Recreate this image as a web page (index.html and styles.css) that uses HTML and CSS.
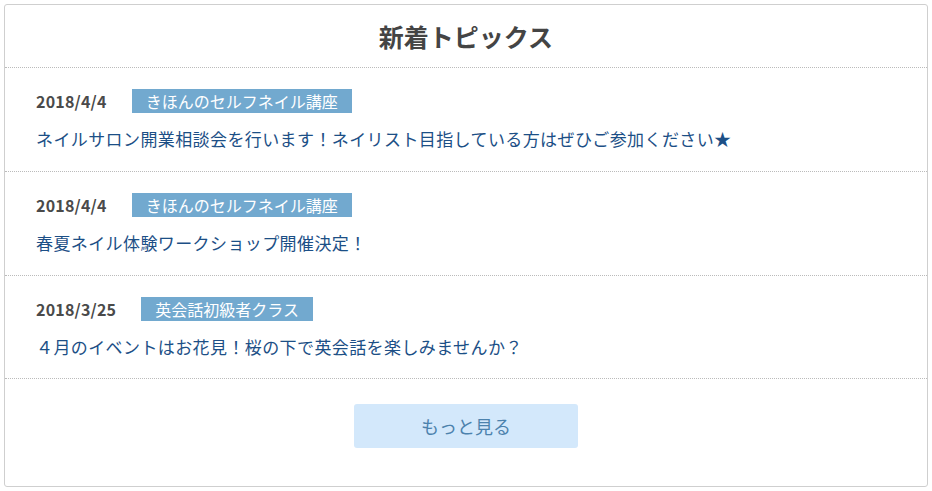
FILE: index.html
```html
<!DOCTYPE html>
<html>
	<head>
		<meta charset="UTF-8">
		<title>新着トピックス</title>
		<link rel="stylesheet" href="styles.css">
	</head>
	<body>
		<div class="topics">
			<h2 class="topics-title">新着トピックス</h2>
			<ul class="topic-list">
				<li class="topic">
					<div class="topic-meta">
						<span class="topic-date">2018/4/4</span>
						<span class="topic-tag">きほんのセルフネイル講座</span>
					</div>
					<a class="topic-link" href="javascript:void(0)">ネイルサロン開業相談会を行います！ネイリスト目指している方はぜひご参加ください★</a>
				</li>
				<li class="topic">
					<div class="topic-meta">
						<span class="topic-date">2018/4/4</span>
						<span class="topic-tag">きほんのセルフネイル講座</span>
					</div>
					<a class="topic-link" href="javascript:void(0)">春夏ネイル体験ワークショップ開催決定！</a>
				</li>
				<li class="topic">
					<div class="topic-meta">
						<span class="topic-date">2018/3/25</span>
						<span class="topic-tag">英会話初級者クラス</span>
					</div>
					<a class="topic-link" href="javascript:void(0)">４月のイベントはお花見！桜の下で英会話を楽しみませんか？</a>
				</li>
			</ul>
			<div class="topics-more">
				<a class="more-btn" href="javascript:void(0)">もっと見る</a>
			</div>
		</div>
	</body>
</html>
```

FILE: styles.css
```css
* {
	margin: 0;
	padding: 0;
	box-sizing: border-box;
}
body {
	padding: 4px;
	background-color: #fff;
	font-family: "Noto Sans CJK JP", "Noto Sans", sans-serif;
	color: #444;
}
.topics {
	width: 924px;
	height: 483px;
	border: 1px solid #cfcfcf;
	border-radius: 3px;
	display: flex;
	flex-direction: column;
}
.topics-title {
	height: 63px;
	font-size: 25px;
	font-weight: bold;
	line-height: 62px;
	text-align: center;
	color: #444;
	border-bottom: 1px dotted #bbb;
}
.topic-list {
	list-style: none;
}
.topic {
	height: 104px;
	padding: 20px 0 0 31px;
	border-bottom: 1px dotted #bbb;
}
.topic:last-child {
	height: 103px;
}
.topic-meta {
	display: flex;
	align-items: center;
	gap: 25px;
	height: 25px;
}
.topic-date {
	font-size: 16px;
	font-weight: bold;
	letter-spacing: 0.2px;
	color: #4a4a4a;
}
.topic-tag {
	height: 24px;
	line-height: 24px;
	padding: 0 14px;
	font-size: 16px;
	color: #fff;
	background-color: #72a9cf;
}
.topic-link {
	display: block;
	margin-top: 14px;
	font-size: 17px;
	letter-spacing: 0.4px;
	line-height: 24px;
	color: #1c4f86;
	text-decoration: none;
}
.topics-more {
	flex: 1;
	display: flex;
	justify-content: center;
	padding-top: 25px;
}
.more-btn {
	width: 224px;
	height: 44px;
	line-height: 44px;
	text-align: center;
	font-size: 18px;
	color: #4c82ad;
	background-color: #d3e8fb;
	border-radius: 3px;
	text-decoration: none;
}
```
